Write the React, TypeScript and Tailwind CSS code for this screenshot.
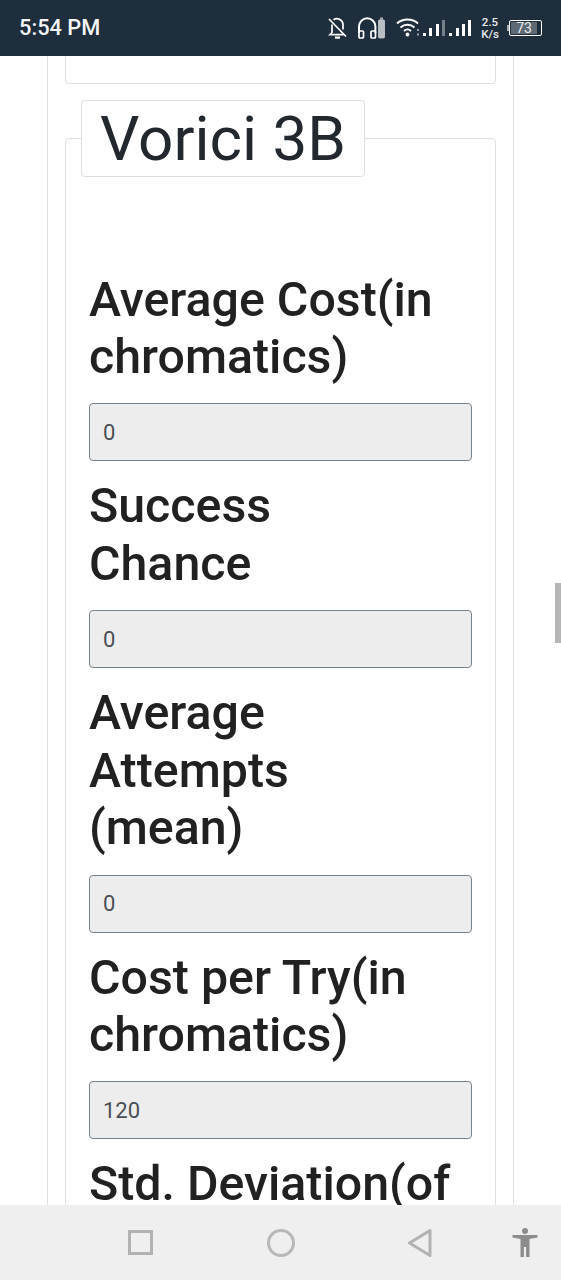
const fields = [
  { label: "Average Cost(in chromatics)", value: "0" },
  { label: "Success Chance", value: "0" },
  { label: "Average Attempts (mean)", value: "0" },
  { label: "Cost per Try(in chromatics)", value: "120" },
];

const labelClass = "text-[48.3px] leading-[57.6px] font-medium text-[#212121]";

function StatusIcons() {
  return (
    <div className="flex items-center">
      <svg width="19" height="24" viewBox="0 0 19 24" fill="none" stroke="#fff" strokeWidth="1.7" className="mr-[10px]">
        <path d="M4 8.5v8l-2 2.2h13.5M5.5 3.8A6 6 0 0 1 15 8v5.5" />
        <path d="M7 21.6h5" strokeWidth="2.2" />
        <path d="M1 3 18 20.5" />
      </svg>
      <svg width="29" height="24" viewBox="0 0 29 24" fill="none" className="mr-[10px]">
        <path d="M2 17v-6.500a8.200 8.200 0 0 1 16.400 0V17" stroke="#fff" strokeWidth="2" />
        <rect x="2" y="15" width="4.5" height="7" rx="1" stroke="#fff" strokeWidth="1.7" />
        <rect x="14" y="15" width="4.5" height="7" rx="1" stroke="#fff" strokeWidth="1.7" />
        <rect x="21.5" y="4" width="6" height="18" rx="1" fill="#b9bec3" stroke="#c9cdd1" strokeWidth="0.8" />
        <rect x="23" y="1.5" width="3" height="2.5" fill="#a3aab0" />
      </svg>
      <svg width="77" height="24" viewBox="0 0 77 24" fill="none" className="mr-[9px]">
        <path d="M1 7.500a16 16 0 0 1 21 0M4.500 11.500a10.500 10.500 0 0 1 14 0M8 15a5 5 0 0 1 7 0" stroke="#fff" strokeWidth="2" />
        <circle cx="11.5" cy="18.5" r="1.9" fill="#fff" />
        <rect x="21" y="13" width="2" height="2" fill="#98a1a9" />
        <rect x="21" y="17.5" width="2" height="2" fill="#98a1a9" />
        <rect x="27" y="17" width="3" height="3" fill="#fff" />
        <rect x="33" y="12" width="3" height="8" fill="#fff" />
        <rect x="40" y="8" width="3" height="12" fill="#fff" />
        <rect x="46" y="4" width="3" height="16" fill="#75818b" />
        <rect x="53" y="17" width="3" height="3" fill="#fff" />
        <rect x="60" y="12" width="3" height="8" fill="#fff" />
        <rect x="66" y="8" width="3" height="12" fill="#fff" />
        <rect x="72" y="4" width="3" height="16" fill="#fff" />
      </svg>
      <div className="w-[16px] flex flex-col items-center text-[11.5px] leading-[12.5px] font-medium text-[#e8eaec] mr-[9px]">
        <span>2.5</span>
        <span>K/s</span>
      </div>
      <div className="w-[2px] h-[6px] bg-[#a6adb3]" />
      <div className="w-[33px] h-[16px] border border-white rounded-[2px] p-[1px] flex">
        <div className="w-[26px] bg-[#5d6a75] flex items-center justify-center text-[14px] leading-none text-[#e8eaec]">
          73
        </div>
      </div>
    </div>
  );
}

export default function App() {
  return (
    <div className="relative h-[1280px] w-[561px] flex flex-col overflow-hidden bg-white font-['Roboto',sans-serif]">
      <header className="h-14 shrink-0 bg-[#1f2e3d] flex items-center justify-between px-[19px]">
        <span className="text-[21.8px] font-medium text-[#f4f5f6]">5:54 PM</span>
        <StatusIcons />
      </header>

      <main className="flex-1 overflow-hidden px-[47px]">
        <div className="border-x border-[#dfdfdf] px-[17px]">
          <div className="h-[28px] border-x border-b border-[#dfdfdf] rounded-b-[4px]" />

          <fieldset className="mt-[16px] min-w-0 border border-[#dfdfdf] rounded-[4px] pb-8">
            <legend className="ml-[15px] h-[77px] w-[284px] border border-[#dfdfdf] rounded-[4px] bg-white flex items-center justify-center text-[62px] leading-none text-[#23282e]">
              Vorici 3B
            </legend>

            <div className="pt-[93.6px] pl-[23px] pr-[23px]">
              {fields.map((f) => (
                <div key={f.label} className="mb-[16px]">
                  <h4 className={`${labelClass} pr-[20px] mb-[17.6px] ${f.label.length < 24 ? "w-[270px]" : ""}`}>
                    {f.label}
                  </h4>
                  <input
                    readOnly
                    value={f.value}
                    className="block w-full h-[58px] px-[13px] bg-[#ededed] border border-[#77838c] rounded-[4px] text-[22px] text-[#4a4f55] outline-none"
                  />
                </div>
              ))}
              <h4 className={labelClass}>Std. Deviation(of</h4>
            </div>
          </fieldset>
        </div>
      </main>

      <div className="absolute right-0 top-[583px] w-[6px] h-[60px] bg-[#b5b5b5]" />

      <nav className="h-[75px] shrink-0 bg-[#efefef] flex items-center pl-[128px]">
        <svg width="25" height="25" viewBox="0 0 25 25" fill="none" stroke="#b2b2b2" strokeWidth="3">
          <rect x="1.5" y="1.5" width="22" height="22" />
        </svg>
        <svg width="30" height="30" viewBox="0 0 30 30" fill="none" stroke="#b8b8b8" strokeWidth="3" className="ml-[113px]">
          <circle cx="15" cy="15" r="12.5" />
        </svg>
        <svg width="25" height="28" viewBox="0 0 25 28" fill="none" stroke="#b2b2b2" strokeWidth="3" strokeLinejoin="round" className="ml-[111px]">
          <path d="M23 1.500v25L2.500 14z" />
        </svg>
        <svg width="26" height="29" viewBox="0 0 26 29" fill="#8c8c8c" className="ml-[80px]">
          <circle cx="13" cy="3" r="3" />
          <path d="M0.500 7h25v2.400L17.500 11v18h-3.400V19h-2.200v10H8.500V11L0.500 9.400z" />
        </svg>
      </nav>
    </div>
  );
}
